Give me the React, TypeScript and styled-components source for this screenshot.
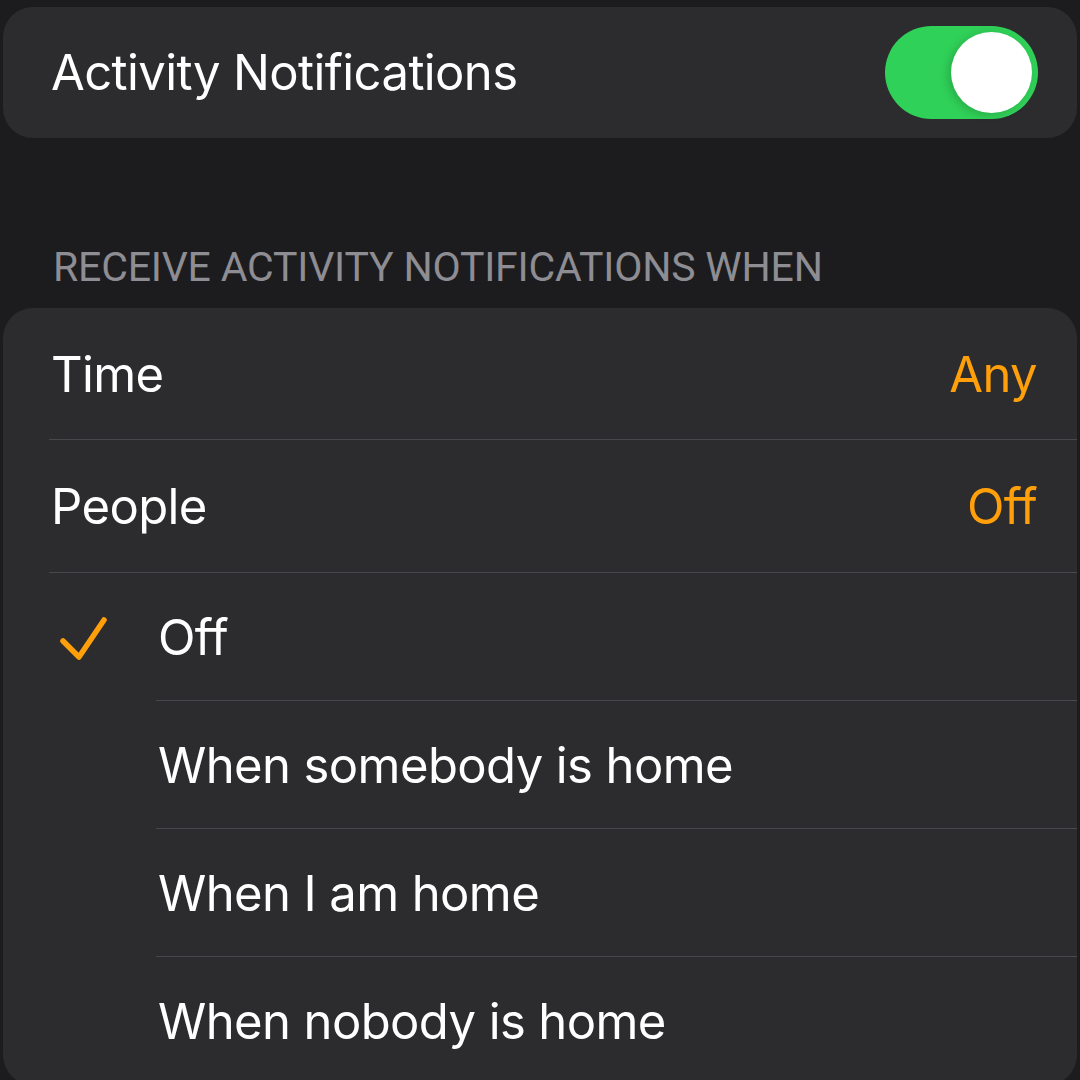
import React from "react";
import styled, { createGlobalStyle } from "styled-components";

const Global = createGlobalStyle`
  html, body { margin: 0; padding: 0; background: #1c1c1e; }
  body { font-family: Inter, "Noto Sans", "Liberation Sans", sans-serif; -webkit-font-smoothing: antialiased; }
`;

const Page = styled.div`
  width: 1080px;
  height: 1080px;
  overflow: hidden;
  background: #1c1c1e;
  padding: 7px 3px 0 3px;
  box-sizing: border-box;
  display: flex;
  flex-direction: column;
`;

const Card = styled.div`
  background: #2c2c2e;
  border-radius: 30px;
  overflow: hidden;
  flex: 0 0 auto;
`;

const ToggleRow = styled.div`
  height: 131px;
  display: flex;
  align-items: center;
  justify-content: space-between;
  padding: 0 39px 0 48px;
`;

const Label = styled.span`
  color: #ffffff;
  font-size: 49px;
  letter-spacing: -0.6px;
  line-height: 1;
`;

const Value = styled.span`
  color: #ff9f0a;
  font-size: 49px;
  letter-spacing: -0.6px;
  line-height: 1;
`;

const Switch = styled.div<{ $on: boolean }>`
  width: 153px;
  height: 93px;
  border-radius: 47px;
  background: ${(p) => (p.$on ? "#30d158" : "#39393d")};
  display: flex;
  align-items: center;
  justify-content: ${(p) => (p.$on ? "flex-end" : "flex-start")};
  padding: 0 6px;
  box-sizing: border-box;
`;

const Knob = styled.div`
  width: 81px;
  height: 81px;
  border-radius: 50%;
  background: #ffffff;
  box-shadow: -3px 2px 10px rgba(0, 0, 0, 0.18);
`;

const SectionHeader = styled.div`
  color: #8d8d93;
  font-family: Roboto, Inter, sans-serif;
  font-size: 41px;
  letter-spacing: -0.2px;
  line-height: 1;
  padding: 109px 0 0 50px;
  height: 170px;
  box-sizing: border-box;
  display: flex;
  align-items: flex-start;
  text-transform: uppercase;
  flex: 0 0 auto;
`;

const ListRow = styled.div<{ $indent: number; $h: number; $sep: boolean }>`
  position: relative;
  height: ${(p) => p.$h}px;
  display: flex;
  align-items: center;
  justify-content: space-between;
  padding: 0 40px 0 ${(p) => p.$indent}px;
  box-sizing: border-box;
  &::after {
    content: "";
    display: ${(p) => (p.$sep ? "block" : "none")};
    position: absolute;
    left: ${(p) => p.$indent - 2}px;
    right: 0;
    bottom: 0;
    height: 1px;
    background: #48484c;
  }
`;

const CheckSlot = styled.div`
  width: 107px;
  flex: 0 0 auto;
  margin-left: -107px;
  display: flex;
  align-items: center;
  padding-left: 8px;
  box-sizing: border-box;
`;

const Left = styled.div`
  display: flex;
  align-items: center;
`;

const Check = () => (
  <svg width="52" height="50" viewBox="0 0 52 50" fill="none">
    <path
      d="M4 29 L20 45 L45 8"
      stroke="#ff9f0a"
      strokeWidth="5.5"
      strokeLinecap="round"
      strokeLinejoin="round"
    />
  </svg>
);

const options = [
  "Off",
  "When somebody is home",
  "When I am home",
  "When nobody is home",
];

export default function App() {
  const selected = "Off";
  return (
    <>
      <Global />
      <Page>
        <Card>
          <ToggleRow>
            <Label>Activity Notifications</Label>
            <Switch $on={true}>
              <Knob />
            </Switch>
          </ToggleRow>
        </Card>
        <SectionHeader>Receive Activity Notifications When</SectionHeader>
        <Card>
          <ListRow $indent={48} $h={132} $sep>
            <Label>Time</Label>
            <Value>Any</Value>
          </ListRow>
          <ListRow $indent={48} $h={133} $sep>
            <Label>People</Label>
            <Value>Off</Value>
          </ListRow>
          {options.map((o, i) => (
            <ListRow key={o} $indent={155} $h={128} $sep={i < options.length - 1}>
              <Left>
                <CheckSlot>{o === selected ? <Check /> : null}</CheckSlot>
                <Label>{o}</Label>
              </Left>
            </ListRow>
          ))}
        </Card>
      </Page>
    </>
  );
}
